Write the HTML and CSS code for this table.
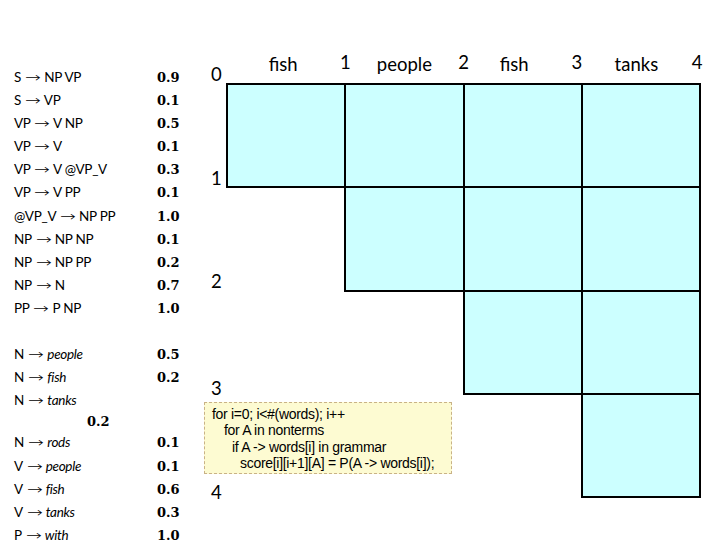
FILE: index.html
```html
<!DOCTYPE html>
<html>
<head>
<meta charset="utf-8">
<link rel="stylesheet" href="styles.css">
</head>
<body>
<div class="slide">
  <div class="grammar">
    <div class="rule"><span class="lhs">S <span class="arr">&#x2192;</span> NP VP</span><span class="p">0.9</span></div>
    <div class="rule"><span class="lhs">S <span class="arr">&#x2192;</span> VP</span><span class="p">0.1</span></div>
    <div class="rule"><span class="lhs">VP <span class="arr">&#x2192;</span> V NP</span><span class="p">0.5</span></div>
    <div class="rule"><span class="lhs">VP <span class="arr">&#x2192;</span> V</span><span class="p">0.1</span></div>
    <div class="rule"><span class="lhs">VP <span class="arr">&#x2192;</span> V @VP_V</span><span class="p">0.3</span></div>
    <div class="rule"><span class="lhs">VP <span class="arr">&#x2192;</span> V PP</span><span class="p">0.1</span></div>
    <div class="rule"><span class="lhs">@VP_V <span class="arr">&#x2192;</span> NP PP</span><span class="p">1.0</span></div>
    <div class="rule"><span class="lhs">NP <span class="arr">&#x2192;</span> NP NP</span><span class="p">0.1</span></div>
    <div class="rule"><span class="lhs">NP <span class="arr">&#x2192;</span> NP PP</span><span class="p">0.2</span></div>
    <div class="rule"><span class="lhs">NP <span class="arr">&#x2192;</span> N</span><span class="p">0.7</span></div>
    <div class="rule"><span class="lhs">PP <span class="arr">&#x2192;</span> P NP</span><span class="p">1.0</span></div>
    <div class="rule empty"></div>
    <div class="rule"><span class="lhs">N <span class="arr">&#x2192;</span> <i>people</i></span><span class="p">0.5</span></div>
    <div class="rule"><span class="lhs">N <span class="arr">&#x2192;</span> <i>fish</i></span><span class="p">0.2</span></div>
    <div class="rule"><span class="lhs">N <span class="arr">&#x2192;</span> <i>tanks</i></span></div>
    <div class="rule wrap"><span class="p">0.2</span></div>
    <div class="rule"><span class="lhs">N <span class="arr">&#x2192;</span> <i>rods</i></span><span class="p">0.1</span></div>
    <div class="rule"><span class="lhs">V <span class="arr">&#x2192;</span> <i>people</i></span><span class="p">0.1</span></div>
    <div class="rule"><span class="lhs">V <span class="arr">&#x2192;</span> <i>fish</i></span><span class="p">0.6</span></div>
    <div class="rule"><span class="lhs">V <span class="arr">&#x2192;</span> <i>tanks</i></span><span class="p">0.3</span></div>
    <div class="rule"><span class="lhs">P <span class="arr">&#x2192;</span> <i>with</i></span><span class="p">1.0</span></div>
  </div>

  <div class="chart">
    <div class="rlabel r0">0</div>
    <div class="head"><span class="word">fish</span><span class="num">1</span></div>
    <div class="head"><span class="word w2">people</span><span class="num">2</span></div>
    <div class="head"><span class="word w3">fish</span><span class="num n3">3</span></div>
    <div class="head"><span class="word">tanks</span><span class="num n4">4</span></div>

    <div class="rlabel r1">1</div>
    <div class="cell c1"></div><div class="cell c2"></div><div class="cell c3"></div><div class="cell c4"></div>

    <div class="rlabel r2">2</div>
    <div class="cell c2"></div><div class="cell c3"></div><div class="cell c4"></div>

    <div class="rlabel r3">3</div>
    <div class="cell c3"></div><div class="cell c4"></div>

    <div class="rlabel r4">4</div>
    <div class="code">for i=0; i&lt;#(words); i++<br><span class="i1">for A in nonterms</span><br><span class="i2">if A -&gt; words[i] in grammar</span><br><span class="i3">score[i][i+1][A] = P(A -&gt; words[i]);</span></div>
    <div class="cell c4"></div>
  </div>
</div>
</body>
</html>
```
FILE: styles.css
```css
html, body {
  margin: 0;
  padding: 0;
  background: #fff;
}
.slide {
  width: 720px;
  height: 540px;
  overflow: hidden;
  display: flex;
  align-items: flex-start;
  color: #000;
}
.grammar {
  width: 190px;
  padding-top: 66px;
  padding-left: 14px;
  font-family: Lato, "Open Sans", sans-serif;
  font-size: 13.5px;
  letter-spacing: -0.3px;
}
.rule {
  display: flex;
  height: 23.1px;
  line-height: 23.1px;
  white-space: nowrap;
}
.rule .lhs {
  width: 143px;
}
.arr {
  font-family: "DejaVu Sans", sans-serif;
  font-weight: 200;
  display: inline-block;
  transform: scaleX(1.4);
  margin: 0 3px;
}
.rule i {
  font-style: italic;
}
.p {
  font-family: "DejaVu Serif", serif;
  font-weight: bold;
  font-size: 13px;
  letter-spacing: 0;
}
.rule.wrap {
  height: 19px;
  line-height: 19px;
  padding-left: 73px;
}
.chart {
  display: grid;
  grid-template-columns: 23px repeat(4, 118.25px);
  grid-template-rows: 84px repeat(4, 103.25px);
  font-family: Lato, "Open Sans", sans-serif;
}
.head {
  display: flex;
  align-items: flex-end;
  padding-bottom: 10px;
  font-size: 18.5px;
  line-height: 20px;
}
.head .word {
  flex: 1;
  text-align: center;
}
.head .w2 { padding-left: 6px; }
.head .w3 { padding-right: 6px; }
.head .num {
  width: 12px;
  margin-right: -6px;
  text-align: center;
  position: relative;
  top: -2px;
}
.head .n3 { margin-right: -1px; }
.head .n4 { margin-right: -3px; }
.rlabel {
  grid-column: 1;
  align-self: end;
  font-size: 18.5px;
  line-height: 20px;
  padding-left: 7px;
}
.r0 { grid-row: 1; }
.r1 { grid-row: 2; margin-bottom: -1px; }
.r2 { grid-row: 3; }
.r3 { grid-row: 4; margin-bottom: -4px; }
.r4 { grid-row: 5; margin-bottom: -5px; }
.cell {
  background: #ccffff;
  border: 2px solid #000;
  margin: -1px;
}
.c1 { grid-column: 2; }
.c2 { grid-column: 3; }
.c3 { grid-column: 4; }
.c4 { grid-column: 5; }
.code {
  grid-column: 1 / 4;
  grid-row: 5;
  align-self: start;
  justify-self: start;
  margin-top: 8px;
  width: 232px;
  height: 64px;
  padding: 3px 7px;
  background: #fdfbd2;
  border: 1px dashed #c9b286;
  font-family: "Liberation Sans", Arial, sans-serif;
  font-size: 14px;
  line-height: 16.5px;
  white-space: nowrap;
  letter-spacing: -0.3px;
  z-index: 1;
}
.code .i1 { padding-left: 12px; }
.code .i2 { padding-left: 20px; }
.code .i3 { padding-left: 28px; }
```
